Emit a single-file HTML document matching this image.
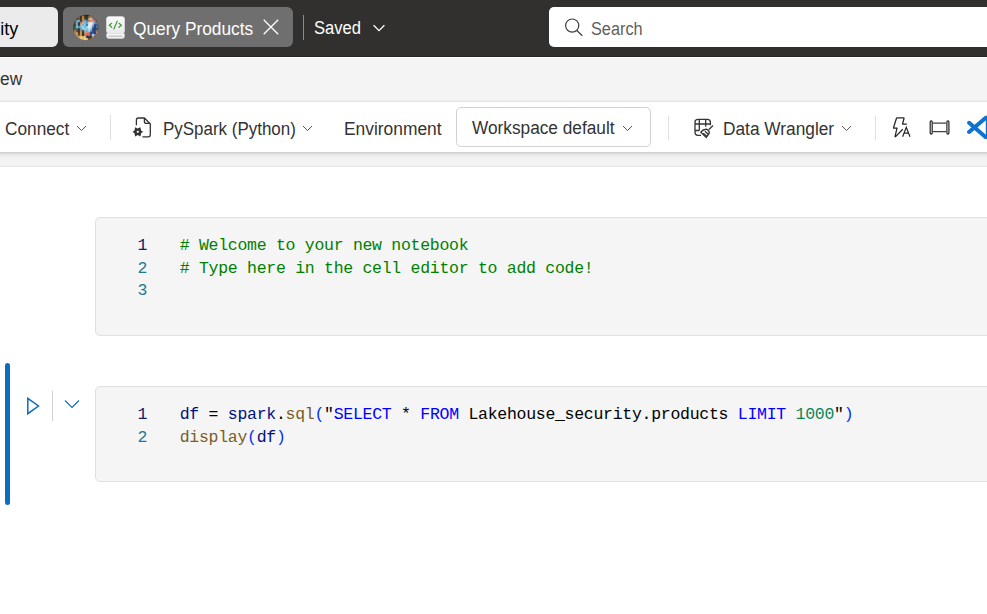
<!DOCTYPE html>
<html><head><meta charset="utf-8">
<style>
*{box-sizing:border-box;margin:0;padding:0}
html,body{width:987px;height:614px;overflow:hidden;background:#fff;font-family:"Liberation Sans",sans-serif;position:relative}
.a{position:absolute}
.t{position:absolute;white-space:pre;line-height:20px;font-size:18px;transform-origin:0 0}
#top{left:0;top:0;width:987px;height:57px;background:#31302e}
#tab1{left:-12px;top:7px;width:70px;height:40px;background:#ebebeb;border-radius:6px}
#tab2{left:63px;top:7px;width:230px;height:40px;background:#6f6f6f;border-radius:6px}
#ribbon{left:0;top:57px;width:987px;height:45px;background:#f4f4f4;border-top:1px solid #fff}
#tool{left:-10px;top:102px;width:1010px;height:50px;background:#fff;box-shadow:0 0 2px rgba(0,0,0,.12),0 2px 4px rgba(0,0,0,.14)}
#band{left:0;top:152px;width:987px;height:15px;background:#f3f3f3;border-bottom:1px solid #e6e6e6}
.sep{position:absolute;width:1px;background:#e0e0e0}
.cell{position:absolute;left:95px;width:910px;background:#f5f5f5;border:1px solid #e0e0e0;border-radius:5px}
.code{position:absolute;font-family:"Liberation Mono",monospace;font-size:16.5px;line-height:22.7px;white-space:pre;letter-spacing:-.28px}
.ln{color:#237893}
.cm{color:#008000}
.v{color:#001080}
.f{color:#795e26}
.b{color:#0431fa}
.k{color:#0000ff}
.n{color:#098658}
.k0{color:#000}
</style></head><body>
<div id="top" class="a"></div>
<div class="a" style="left:0;top:56px;width:987px;height:1px;background:#262523"></div>
<div id="tab1" class="a"></div>
<div class="t" style="left:0.2px;top:18.5px;color:#000">ity</div>
<div id="tab2" class="a"></div>
<!-- avatar -->
<svg class="a" style="left:72px;top:14px" width="28" height="28" viewBox="72 14 28 28" shape-rendering="crispEdges">
<defs><clipPath id="cc"><circle cx="85.75" cy="27.5" r="12.65"/></clipPath></defs>
<g clip-path="url(#cc)"><rect x="82" y="14" width="1" height="1" fill="#553820"/><rect x="83" y="14" width="1" height="1" fill="#55371f"/><rect x="84" y="14" width="1" height="1" fill="#3f2b19"/><rect x="85" y="14" width="1" height="1" fill="#332818"/><rect x="86" y="14" width="1" height="1" fill="#112a1a"/><rect x="87" y="14" width="1" height="1" fill="#0c2c1c"/><rect x="88" y="14" width="1" height="1" fill="#183828"/><rect x="89" y="14" width="1" height="1" fill="#283d2b"/><rect x="79" y="15" width="1" height="1" fill="#433023"/><rect x="80" y="15" width="1" height="1" fill="#3d2c20"/><rect x="81" y="15" width="1" height="1" fill="#432f20"/><rect x="82" y="15" width="1" height="1" fill="#624123"/><rect x="83" y="15" width="1" height="1" fill="#624123"/><rect x="84" y="15" width="1" height="1" fill="#452f1b"/><rect x="85" y="15" width="1" height="1" fill="#352a1a"/><rect x="86" y="15" width="1" height="1" fill="#142c1c"/><rect x="87" y="15" width="1" height="1" fill="#13301e"/><rect x="88" y="15" width="1" height="1" fill="#273c29"/><rect x="89" y="15" width="1" height="1" fill="#3a432c"/><rect x="90" y="15" width="1" height="1" fill="#775231"/><rect x="91" y="15" width="1" height="1" fill="#795031"/><rect x="78" y="16" width="1" height="1" fill="#755238"/><rect x="79" y="16" width="1" height="1" fill="#755237"/><rect x="80" y="16" width="1" height="1" fill="#432f1e"/><rect x="81" y="16" width="1" height="1" fill="#4b351e"/><rect x="82" y="16" width="1" height="1" fill="#a67737"/><rect x="83" y="16" width="1" height="1" fill="#a87837"/><rect x="84" y="16" width="1" height="1" fill="#573a23"/><rect x="85" y="16" width="1" height="1" fill="#403020"/><rect x="86" y="16" width="1" height="1" fill="#1f3625"/><rect x="87" y="16" width="1" height="1" fill="#273c27"/><rect x="88" y="16" width="1" height="1" fill="#7c552e"/><rect x="89" y="16" width="1" height="1" fill="#915d31"/><rect x="90" y="16" width="1" height="1" fill="#a2693c"/><rect x="91" y="16" width="1" height="1" fill="#9f673d"/><rect x="92" y="16" width="1" height="1" fill="#79573c"/><rect x="93" y="16" width="1" height="1" fill="#694d38"/><rect x="77" y="17" width="1" height="1" fill="#493325"/><rect x="78" y="17" width="1" height="1" fill="#7d573a"/><rect x="79" y="17" width="1" height="1" fill="#7c5638"/><rect x="80" y="17" width="1" height="1" fill="#45301d"/><rect x="81" y="17" width="1" height="1" fill="#50381f"/><rect x="82" y="17" width="1" height="1" fill="#b4823c"/><rect x="83" y="17" width="1" height="1" fill="#b7843e"/><rect x="84" y="17" width="1" height="1" fill="#5f4127"/><rect x="85" y="17" width="1" height="1" fill="#453323"/><rect x="86" y="17" width="1" height="1" fill="#223928"/><rect x="87" y="17" width="1" height="1" fill="#30422e"/><rect x="88" y="17" width="1" height="1" fill="#90623a"/><rect x="89" y="17" width="1" height="1" fill="#a86d42"/><rect x="90" y="17" width="1" height="1" fill="#b47b50"/><rect x="91" y="17" width="1" height="1" fill="#af7950"/><rect x="92" y="17" width="1" height="1" fill="#88654a"/><rect x="93" y="17" width="1" height="1" fill="#765842"/><rect x="94" y="17" width="1" height="1" fill="#4a372a"/><rect x="76" y="18" width="1" height="1" fill="#523626"/><rect x="77" y="18" width="1" height="1" fill="#5c3c29"/><rect x="78" y="18" width="1" height="1" fill="#764e30"/><rect x="79" y="18" width="1" height="1" fill="#724c2e"/><rect x="80" y="18" width="1" height="1" fill="#442f1c"/><rect x="81" y="18" width="1" height="1" fill="#503920"/><rect x="82" y="18" width="1" height="1" fill="#b98c46"/><rect x="83" y="18" width="1" height="1" fill="#bd8f49"/><rect x="84" y="18" width="1" height="1" fill="#6a4c32"/><rect x="85" y="18" width="1" height="1" fill="#4f3d2e"/><rect x="86" y="18" width="1" height="1" fill="#273a2e"/><rect x="87" y="18" width="1" height="1" fill="#36473a"/><rect x="88" y="18" width="1" height="1" fill="#a48a76"/><rect x="89" y="18" width="1" height="1" fill="#bf9c88"/><rect x="90" y="18" width="1" height="1" fill="#d5bca7"/><rect x="91" y="18" width="1" height="1" fill="#d0b8a4"/><rect x="92" y="18" width="1" height="1" fill="#a48472"/><rect x="93" y="18" width="1" height="1" fill="#927362"/><rect x="94" y="18" width="1" height="1" fill="#6b5242"/><rect x="95" y="18" width="1" height="1" fill="#5d4638"/><rect x="75" y="19" width="1" height="1" fill="#443429"/><rect x="76" y="19" width="1" height="1" fill="#57463a"/><rect x="77" y="19" width="1" height="1" fill="#5e4f43"/><rect x="78" y="19" width="1" height="1" fill="#745f4a"/><rect x="79" y="19" width="1" height="1" fill="#6f5842"/><rect x="80" y="19" width="1" height="1" fill="#433325"/><rect x="81" y="19" width="1" height="1" fill="#503a24"/><rect x="82" y="19" width="1" height="1" fill="#b88b4a"/><rect x="83" y="19" width="1" height="1" fill="#bd9354"/><rect x="84" y="19" width="1" height="1" fill="#6e5c49"/><rect x="85" y="19" width="1" height="1" fill="#555047"/><rect x="86" y="19" width="1" height="1" fill="#2e4841"/><rect x="87" y="19" width="1" height="1" fill="#3d4f47"/><rect x="88" y="19" width="1" height="1" fill="#ab8e80"/><rect x="89" y="19" width="1" height="1" fill="#c79f8f"/><rect x="90" y="19" width="1" height="1" fill="#dcbeae"/><rect x="91" y="19" width="1" height="1" fill="#d8bcac"/><rect x="92" y="19" width="1" height="1" fill="#ad8d7d"/><rect x="93" y="19" width="1" height="1" fill="#9f7e6d"/><rect x="94" y="19" width="1" height="1" fill="#7d5c4a"/><rect x="95" y="19" width="1" height="1" fill="#6c4e3d"/><rect x="96" y="19" width="1" height="1" fill="#443125"/><rect x="74" y="20" width="1" height="1" fill="#5d402c"/><rect x="75" y="20" width="1" height="1" fill="#625040"/><rect x="76" y="20" width="1" height="1" fill="#5b92a4"/><rect x="77" y="20" width="1" height="1" fill="#5ea2ba"/><rect x="78" y="20" width="1" height="1" fill="#6eb2c9"/><rect x="79" y="20" width="1" height="1" fill="#69a3b7"/><rect x="80" y="20" width="1" height="1" fill="#424142"/><rect x="81" y="20" width="1" height="1" fill="#4f3c34"/><rect x="82" y="20" width="1" height="1" fill="#ae7756"/><rect x="83" y="20" width="1" height="1" fill="#b5886b"/><rect x="84" y="20" width="1" height="1" fill="#7aa9b8"/><rect x="85" y="20" width="1" height="1" fill="#66a5bd"/><rect x="86" y="20" width="1" height="1" fill="#4a7d8b"/><rect x="87" y="20" width="1" height="1" fill="#597880"/><rect x="88" y="20" width="1" height="1" fill="#b97569"/><rect x="89" y="20" width="1" height="1" fill="#d17b6b"/><rect x="90" y="20" width="1" height="1" fill="#dd8878"/><rect x="91" y="20" width="1" height="1" fill="#da8d7d"/><rect x="92" y="20" width="1" height="1" fill="#c19b8b"/><rect x="93" y="20" width="1" height="1" fill="#b99482"/><rect x="94" y="20" width="1" height="1" fill="#b57257"/><rect x="95" y="20" width="1" height="1" fill="#a26247"/><rect x="96" y="20" width="1" height="1" fill="#4b3327"/><rect x="74" y="21" width="1" height="1" fill="#64442e"/><rect x="75" y="21" width="1" height="1" fill="#685849"/><rect x="76" y="21" width="1" height="1" fill="#5da2ba"/><rect x="77" y="21" width="1" height="1" fill="#5cafce"/><rect x="78" y="21" width="1" height="1" fill="#67b2ce"/><rect x="79" y="21" width="1" height="1" fill="#67a2b8"/><rect x="80" y="21" width="1" height="1" fill="#504a4a"/><rect x="81" y="21" width="1" height="1" fill="#5f483f"/><rect x="82" y="21" width="1" height="1" fill="#b57d60"/><rect x="83" y="21" width="1" height="1" fill="#b78f79"/><rect x="84" y="21" width="1" height="1" fill="#7bb8cf"/><rect x="85" y="21" width="1" height="1" fill="#69b8d6"/><rect x="86" y="21" width="1" height="1" fill="#508fa3"/><rect x="87" y="21" width="1" height="1" fill="#608794"/><rect x="88" y="21" width="1" height="1" fill="#bf8177"/><rect x="89" y="21" width="1" height="1" fill="#d68375"/><rect x="90" y="21" width="1" height="1" fill="#e08e80"/><rect x="91" y="21" width="1" height="1" fill="#dd9386"/><rect x="92" y="21" width="1" height="1" fill="#c5a599"/><rect x="93" y="21" width="1" height="1" fill="#bd9f93"/><rect x="94" y="21" width="1" height="1" fill="#b77d67"/><rect x="95" y="21" width="1" height="1" fill="#a56c58"/><rect x="96" y="21" width="1" height="1" fill="#503f37"/><rect x="97" y="21" width="1" height="1" fill="#3f342d"/><rect x="73" y="22" width="1" height="1" fill="#593f2e"/><rect x="74" y="22" width="1" height="1" fill="#66462f"/><rect x="75" y="22" width="1" height="1" fill="#68594a"/><rect x="76" y="22" width="1" height="1" fill="#61acc4"/><rect x="77" y="22" width="1" height="1" fill="#5cacc9"/><rect x="78" y="22" width="1" height="1" fill="#464a53"/><rect x="79" y="22" width="1" height="1" fill="#503f3f"/><rect x="80" y="22" width="1" height="1" fill="#a5755e"/><rect x="81" y="22" width="1" height="1" fill="#ba8266"/><rect x="82" y="22" width="1" height="1" fill="#d3a182"/><rect x="83" y="22" width="1" height="1" fill="#caad97"/><rect x="84" y="22" width="1" height="1" fill="#74bcd2"/><rect x="85" y="22" width="1" height="1" fill="#5fbcdb"/><rect x="86" y="22" width="1" height="1" fill="#52adcb"/><rect x="87" y="22" width="1" height="1" fill="#65aec6"/><rect x="88" y="22" width="1" height="1" fill="#cecac7"/><rect x="89" y="22" width="1" height="1" fill="#e6d2c9"/><rect x="90" y="22" width="1" height="1" fill="#ecddda"/><rect x="91" y="22" width="1" height="1" fill="#e7dddc"/><rect x="92" y="22" width="1" height="1" fill="#c7cbd5"/><rect x="93" y="22" width="1" height="1" fill="#b7c0cc"/><rect x="94" y="22" width="1" height="1" fill="#8594a9"/><rect x="95" y="22" width="1" height="1" fill="#76879c"/><rect x="96" y="22" width="1" height="1" fill="#687885"/><rect x="97" y="22" width="1" height="1" fill="#5d6973"/><rect x="73" y="23" width="1" height="1" fill="#5b402e"/><rect x="74" y="23" width="1" height="1" fill="#64442e"/><rect x="75" y="23" width="1" height="1" fill="#655749"/><rect x="76" y="23" width="1" height="1" fill="#60adc5"/><rect x="77" y="23" width="1" height="1" fill="#5aa8c4"/><rect x="78" y="23" width="1" height="1" fill="#3e383f"/><rect x="79" y="23" width="1" height="1" fill="#4e312e"/><rect x="80" y="23" width="1" height="1" fill="#b57d62"/><rect x="81" y="23" width="1" height="1" fill="#ca9275"/><rect x="82" y="23" width="1" height="1" fill="#d1ac93"/><rect x="83" y="23" width="1" height="1" fill="#c1b3a4"/><rect x="84" y="23" width="1" height="1" fill="#73bfd8"/><rect x="85" y="23" width="1" height="1" fill="#60bcde"/><rect x="86" y="23" width="1" height="1" fill="#50aace"/><rect x="87" y="23" width="1" height="1" fill="#64afcd"/><rect x="88" y="23" width="1" height="1" fill="#d1d8d8"/><rect x="89" y="23" width="1" height="1" fill="#eae4de"/><rect x="90" y="23" width="1" height="1" fill="#eeeded"/><rect x="91" y="23" width="1" height="1" fill="#e7e9ed"/><rect x="92" y="23" width="1" height="1" fill="#c3d2e1"/><rect x="93" y="23" width="1" height="1" fill="#adc1d5"/><rect x="94" y="23" width="1" height="1" fill="#7290b1"/><rect x="95" y="23" width="1" height="1" fill="#6583a6"/><rect x="96" y="23" width="1" height="1" fill="#637c95"/><rect x="97" y="23" width="1" height="1" fill="#5e7081"/><rect x="98" y="23" width="1" height="1" fill="#403631"/><rect x="72" y="24" width="1" height="1" fill="#5a3b29"/><rect x="73" y="24" width="1" height="1" fill="#593a28"/><rect x="74" y="24" width="1" height="1" fill="#503423"/><rect x="75" y="24" width="1" height="1" fill="#51483f"/><rect x="76" y="24" width="1" height="1" fill="#5eabc4"/><rect x="77" y="24" width="1" height="1" fill="#58a8c5"/><rect x="78" y="24" width="1" height="1" fill="#343849"/><rect x="79" y="24" width="1" height="1" fill="#46343b"/><rect x="80" y="24" width="1" height="1" fill="#c3967c"/><rect x="81" y="24" width="1" height="1" fill="#d1ac93"/><rect x="82" y="24" width="1" height="1" fill="#8caebe"/><rect x="83" y="24" width="1" height="1" fill="#7eb4cd"/><rect x="84" y="24" width="1" height="1" fill="#7ec9e7"/><rect x="85" y="24" width="1" height="1" fill="#72c0e4"/><rect x="86" y="24" width="1" height="1" fill="#3e79b1"/><rect x="87" y="24" width="1" height="1" fill="#507eb0"/><rect x="88" y="24" width="1" height="1" fill="#d4dce3"/><rect x="89" y="24" width="1" height="1" fill="#eeeded"/><rect x="90" y="24" width="1" height="1" fill="#eaeaef"/><rect x="91" y="24" width="1" height="1" fill="#dfe3ec"/><rect x="92" y="24" width="1" height="1" fill="#afc2d7"/><rect x="93" y="24" width="1" height="1" fill="#93acc8"/><rect x="94" y="24" width="1" height="1" fill="#3d5c92"/><rect x="95" y="24" width="1" height="1" fill="#2f4f8a"/><rect x="96" y="24" width="1" height="1" fill="#43629b"/><rect x="97" y="24" width="1" height="1" fill="#445c8b"/><rect x="98" y="24" width="1" height="1" fill="#3c3333"/><rect x="72" y="25" width="1" height="1" fill="#583a28"/><rect x="73" y="25" width="1" height="1" fill="#553a27"/><rect x="74" y="25" width="1" height="1" fill="#4a3723"/><rect x="75" y="25" width="1" height="1" fill="#4d4c3f"/><rect x="76" y="25" width="1" height="1" fill="#60aec6"/><rect x="77" y="25" width="1" height="1" fill="#5dafcd"/><rect x="78" y="25" width="1" height="1" fill="#38475b"/><rect x="79" y="25" width="1" height="1" fill="#454552"/><rect x="80" y="25" width="1" height="1" fill="#baa190"/><rect x="81" y="25" width="1" height="1" fill="#c4b4a4"/><rect x="82" y="25" width="1" height="1" fill="#82b6cd"/><rect x="83" y="25" width="1" height="1" fill="#77b9d7"/><rect x="84" y="25" width="1" height="1" fill="#7cc9e9"/><rect x="85" y="25" width="1" height="1" fill="#74c0e3"/><rect x="86" y="25" width="1" height="1" fill="#467eb4"/><rect x="87" y="25" width="1" height="1" fill="#5884b5"/><rect x="88" y="25" width="1" height="1" fill="#d7dfe7"/><rect x="89" y="25" width="1" height="1" fill="#eeeef0"/><rect x="90" y="25" width="1" height="1" fill="#e6e8f0"/><rect x="91" y="25" width="1" height="1" fill="#d7deeb"/><rect x="92" y="25" width="1" height="1" fill="#9fb9d3"/><rect x="93" y="25" width="1" height="1" fill="#829fc2"/><rect x="94" y="25" width="1" height="1" fill="#304f8a"/><rect x="95" y="25" width="1" height="1" fill="#254584"/><rect x="96" y="25" width="1" height="1" fill="#3d5e9e"/><rect x="97" y="25" width="1" height="1" fill="#415c90"/><rect x="98" y="25" width="1" height="1" fill="#3c3334"/><rect x="72" y="26" width="1" height="1" fill="#4c3a28"/><rect x="73" y="26" width="1" height="1" fill="#4a3e29"/><rect x="74" y="26" width="1" height="1" fill="#3f552d"/><rect x="75" y="26" width="1" height="1" fill="#456b4a"/><rect x="76" y="26" width="1" height="1" fill="#72bcd1"/><rect x="77" y="26" width="1" height="1" fill="#74c2e2"/><rect x="78" y="26" width="1" height="1" fill="#5298b6"/><rect x="79" y="26" width="1" height="1" fill="#5596b2"/><rect x="80" y="26" width="1" height="1" fill="#76b5cd"/><rect x="81" y="26" width="1" height="1" fill="#82c1d8"/><rect x="82" y="26" width="1" height="1" fill="#98d5e7"/><rect x="83" y="26" width="1" height="1" fill="#92d5e9"/><rect x="84" y="26" width="1" height="1" fill="#6bb9d7"/><rect x="85" y="26" width="1" height="1" fill="#67b6d5"/><rect x="86" y="26" width="1" height="1" fill="#7fcce3"/><rect x="87" y="26" width="1" height="1" fill="#94d4e7"/><rect x="88" y="26" width="1" height="1" fill="#dee9ed"/><rect x="89" y="26" width="1" height="1" fill="#eceef0"/><rect x="90" y="26" width="1" height="1" fill="#d8e3f0"/><rect x="91" y="26" width="1" height="1" fill="#c1d5e9"/><rect x="92" y="26" width="1" height="1" fill="#6195c9"/><rect x="93" y="26" width="1" height="1" fill="#467cb6"/><rect x="94" y="26" width="1" height="1" fill="#28467e"/><rect x="95" y="26" width="1" height="1" fill="#27427d"/><rect x="96" y="26" width="1" height="1" fill="#4772b1"/><rect x="97" y="26" width="1" height="1" fill="#4b70a4"/><rect x="98" y="26" width="1" height="1" fill="#3d3637"/><rect x="72" y="27" width="1" height="1" fill="#483827"/><rect x="73" y="27" width="1" height="1" fill="#483e29"/><rect x="74" y="27" width="1" height="1" fill="#415930"/><rect x="75" y="27" width="1" height="1" fill="#486c4a"/><rect x="76" y="27" width="1" height="1" fill="#71b2c7"/><rect x="77" y="27" width="1" height="1" fill="#72b8d7"/><rect x="78" y="27" width="1" height="1" fill="#5396b5"/><rect x="79" y="27" width="1" height="1" fill="#5298b5"/><rect x="80" y="27" width="1" height="1" fill="#69b5d3"/><rect x="81" y="27" width="1" height="1" fill="#74c2de"/><rect x="82" y="27" width="1" height="1" fill="#95d9eb"/><rect x="83" y="27" width="1" height="1" fill="#96d8ea"/><rect x="84" y="27" width="1" height="1" fill="#73b8d7"/><rect x="85" y="27" width="1" height="1" fill="#71b8d7"/><rect x="86" y="27" width="1" height="1" fill="#8bd6ea"/><rect x="87" y="27" width="1" height="1" fill="#9adeee"/><rect x="88" y="27" width="1" height="1" fill="#d8ecef"/><rect x="89" y="27" width="1" height="1" fill="#e0ecf0"/><rect x="90" y="27" width="1" height="1" fill="#cbe1f0"/><rect x="91" y="27" width="1" height="1" fill="#b3cee5"/><rect x="92" y="27" width="1" height="1" fill="#5187bc"/><rect x="93" y="27" width="1" height="1" fill="#3a6ea9"/><rect x="94" y="27" width="1" height="1" fill="#254178"/><rect x="95" y="27" width="1" height="1" fill="#28417a"/><rect x="96" y="27" width="1" height="1" fill="#476fad"/><rect x="97" y="27" width="1" height="1" fill="#4a6da1"/><rect x="98" y="27" width="1" height="1" fill="#3c3536"/><rect x="72" y="28" width="1" height="1" fill="#3c2c21"/><rect x="73" y="28" width="1" height="1" fill="#413325"/><rect x="74" y="28" width="1" height="1" fill="#5e543a"/><rect x="75" y="28" width="1" height="1" fill="#62604c"/><rect x="76" y="28" width="1" height="1" fill="#536c82"/><rect x="77" y="28" width="1" height="1" fill="#4e6a88"/><rect x="78" y="28" width="1" height="1" fill="#41485c"/><rect x="79" y="28" width="1" height="1" fill="#435063"/><rect x="80" y="28" width="1" height="1" fill="#5da3b5"/><rect x="81" y="28" width="1" height="1" fill="#68b7c9"/><rect x="82" y="28" width="1" height="1" fill="#7fcede"/><rect x="83" y="28" width="1" height="1" fill="#8acfe2"/><rect x="84" y="28" width="1" height="1" fill="#adc1e5"/><rect x="85" y="28" width="1" height="1" fill="#acbfe5"/><rect x="86" y="28" width="1" height="1" fill="#88c3e2"/><rect x="87" y="28" width="1" height="1" fill="#8acae4"/><rect x="88" y="28" width="1" height="1" fill="#a5e4ee"/><rect x="89" y="28" width="1" height="1" fill="#a9e7f0"/><rect x="90" y="28" width="1" height="1" fill="#9ddcf0"/><rect x="91" y="28" width="1" height="1" fill="#89c4de"/><rect x="92" y="28" width="1" height="1" fill="#435e80"/><rect x="93" y="28" width="1" height="1" fill="#31466d"/><rect x="94" y="28" width="1" height="1" fill="#2a3d71"/><rect x="95" y="28" width="1" height="1" fill="#2c3e75"/><rect x="96" y="28" width="1" height="1" fill="#3a4e85"/><rect x="97" y="28" width="1" height="1" fill="#3c4b79"/><rect x="98" y="28" width="1" height="1" fill="#3b3131"/><rect x="72" y="29" width="1" height="1" fill="#3a2a20"/><rect x="73" y="29" width="1" height="1" fill="#433325"/><rect x="74" y="29" width="1" height="1" fill="#69573d"/><rect x="75" y="29" width="1" height="1" fill="#6c5e49"/><rect x="76" y="29" width="1" height="1" fill="#535e70"/><rect x="77" y="29" width="1" height="1" fill="#49566e"/><rect x="78" y="29" width="1" height="1" fill="#3d3544"/><rect x="79" y="29" width="1" height="1" fill="#43414b"/><rect x="80" y="29" width="1" height="1" fill="#65999f"/><rect x="81" y="29" width="1" height="1" fill="#6cacb3"/><rect x="82" y="29" width="1" height="1" fill="#74bac9"/><rect x="83" y="29" width="1" height="1" fill="#7cbdd2"/><rect x="84" y="29" width="1" height="1" fill="#acbcdf"/><rect x="85" y="29" width="1" height="1" fill="#aebee4"/><rect x="86" y="29" width="1" height="1" fill="#84bede"/><rect x="87" y="29" width="1" height="1" fill="#82c3e0"/><rect x="88" y="29" width="1" height="1" fill="#9edfea"/><rect x="89" y="29" width="1" height="1" fill="#9fe0eb"/><rect x="90" y="29" width="1" height="1" fill="#8ed1e8"/><rect x="91" y="29" width="1" height="1" fill="#7cb9d4"/><rect x="92" y="29" width="1" height="1" fill="#3d5577"/><rect x="93" y="29" width="1" height="1" fill="#2f4067"/><rect x="94" y="29" width="1" height="1" fill="#2b3c71"/><rect x="95" y="29" width="1" height="1" fill="#303f73"/><rect x="96" y="29" width="1" height="1" fill="#434e7b"/><rect x="97" y="29" width="1" height="1" fill="#454b6e"/><rect x="98" y="29" width="1" height="1" fill="#3e312d"/><rect x="72" y="30" width="1" height="1" fill="#3a2a20"/><rect x="73" y="30" width="1" height="1" fill="#473527"/><rect x="74" y="30" width="1" height="1" fill="#8b6f47"/><rect x="75" y="30" width="1" height="1" fill="#8f744e"/><rect x="76" y="30" width="1" height="1" fill="#615349"/><rect x="77" y="30" width="1" height="1" fill="#534844"/><rect x="78" y="30" width="1" height="1" fill="#3e2f2b"/><rect x="79" y="30" width="1" height="1" fill="#4a3a2f"/><rect x="80" y="30" width="1" height="1" fill="#a18457"/><rect x="81" y="30" width="1" height="1" fill="#a18d64"/><rect x="82" y="30" width="1" height="1" fill="#3f5d70"/><rect x="83" y="30" width="1" height="1" fill="#3c6280"/><rect x="84" y="30" width="1" height="1" fill="#7cacc7"/><rect x="85" y="30" width="1" height="1" fill="#84b8d3"/><rect x="86" y="30" width="1" height="1" fill="#6bb3d3"/><rect x="87" y="30" width="1" height="1" fill="#71b8d4"/><rect x="88" y="30" width="1" height="1" fill="#afceda"/><rect x="89" y="30" width="1" height="1" fill="#b0ccd7"/><rect x="90" y="30" width="1" height="1" fill="#73a3be"/><rect x="91" y="30" width="1" height="1" fill="#5e8daf"/><rect x="92" y="30" width="1" height="1" fill="#395586"/><rect x="93" y="30" width="1" height="1" fill="#2f467c"/><rect x="94" y="30" width="1" height="1" fill="#2b407d"/><rect x="95" y="30" width="1" height="1" fill="#38477b"/><rect x="96" y="30" width="1" height="1" fill="#837068"/><rect x="97" y="30" width="1" height="1" fill="#856d5a"/><rect x="98" y="30" width="1" height="1" fill="#45352b"/><rect x="73" y="31" width="1" height="1" fill="#4a3827"/><rect x="74" y="31" width="1" height="1" fill="#947548"/><rect x="75" y="31" width="1" height="1" fill="#9e7d4d"/><rect x="76" y="31" width="1" height="1" fill="#735c44"/><rect x="77" y="31" width="1" height="1" fill="#624f3d"/><rect x="78" y="31" width="1" height="1" fill="#433025"/><rect x="79" y="31" width="1" height="1" fill="#4f3928"/><rect x="80" y="31" width="1" height="1" fill="#b0844b"/><rect x="81" y="31" width="1" height="1" fill="#ab8652"/><rect x="82" y="31" width="1" height="1" fill="#394a59"/><rect x="83" y="31" width="1" height="1" fill="#314d68"/><rect x="84" y="31" width="1" height="1" fill="#7ca0b3"/><rect x="85" y="31" width="1" height="1" fill="#8bb0c1"/><rect x="86" y="31" width="1" height="1" fill="#77aac0"/><rect x="87" y="31" width="1" height="1" fill="#7eacc0"/><rect x="88" y="31" width="1" height="1" fill="#b9bfc3"/><rect x="89" y="31" width="1" height="1" fill="#b2b8c0"/><rect x="90" y="31" width="1" height="1" fill="#698caa"/><rect x="91" y="31" width="1" height="1" fill="#537ca3"/><rect x="92" y="31" width="1" height="1" fill="#355088"/><rect x="93" y="31" width="1" height="1" fill="#2f4782"/><rect x="94" y="31" width="1" height="1" fill="#2a407e"/><rect x="95" y="31" width="1" height="1" fill="#3c4978"/><rect x="96" y="31" width="1" height="1" fill="#927965"/><rect x="97" y="31" width="1" height="1" fill="#947758"/><rect x="98" y="31" width="1" height="1" fill="#4a382a"/><rect x="73" y="32" width="1" height="1" fill="#4d3926"/><rect x="74" y="32" width="1" height="1" fill="#a87f43"/><rect x="75" y="32" width="1" height="1" fill="#ba8d4a"/><rect x="76" y="32" width="1" height="1" fill="#bf934d"/><rect x="77" y="32" width="1" height="1" fill="#ac8447"/><rect x="78" y="32" width="1" height="1" fill="#4c3727"/><rect x="79" y="32" width="1" height="1" fill="#523b29"/><rect x="80" y="32" width="1" height="1" fill="#c49855"/><rect x="81" y="32" width="1" height="1" fill="#bf9859"/><rect x="82" y="32" width="1" height="1" fill="#37383c"/><rect x="83" y="32" width="1" height="1" fill="#353643"/><rect x="84" y="32" width="1" height="1" fill="#b88573"/><rect x="85" y="32" width="1" height="1" fill="#d0947d"/><rect x="86" y="32" width="1" height="1" fill="#ce8973"/><rect x="87" y="32" width="1" height="1" fill="#d0876f"/><rect x="88" y="32" width="1" height="1" fill="#d27f66"/><rect x="89" y="32" width="1" height="1" fill="#bd7666"/><rect x="90" y="32" width="1" height="1" fill="#494f78"/><rect x="91" y="32" width="1" height="1" fill="#31477d"/><rect x="92" y="32" width="1" height="1" fill="#314f98"/><rect x="93" y="32" width="1" height="1" fill="#2e4b94"/><rect x="94" y="32" width="1" height="1" fill="#24366c"/><rect x="95" y="32" width="1" height="1" fill="#384165"/><rect x="96" y="32" width="1" height="1" fill="#a58c6d"/><rect x="97" y="32" width="1" height="1" fill="#a88b62"/><rect x="74" y="33" width="1" height="1" fill="#a87d41"/><rect x="75" y="33" width="1" height="1" fill="#bf8f49"/><rect x="76" y="33" width="1" height="1" fill="#cc9c50"/><rect x="77" y="33" width="1" height="1" fill="#bb8f4b"/><rect x="78" y="33" width="1" height="1" fill="#563c28"/><rect x="79" y="33" width="1" height="1" fill="#583e29"/><rect x="80" y="33" width="1" height="1" fill="#c79a55"/><rect x="81" y="33" width="1" height="1" fill="#c09856"/><rect x="82" y="33" width="1" height="1" fill="#373435"/><rect x="83" y="33" width="1" height="1" fill="#372f37"/><rect x="84" y="33" width="1" height="1" fill="#c07d64"/><rect x="85" y="33" width="1" height="1" fill="#dd8b6b"/><rect x="86" y="33" width="1" height="1" fill="#dc7e5e"/><rect x="87" y="33" width="1" height="1" fill="#db7a5a"/><rect x="88" y="33" width="1" height="1" fill="#d77151"/><rect x="89" y="33" width="1" height="1" fill="#bd6956"/><rect x="90" y="33" width="1" height="1" fill="#44456f"/><rect x="91" y="33" width="1" height="1" fill="#32457e"/><rect x="92" y="33" width="1" height="1" fill="#435ea2"/><rect x="93" y="33" width="1" height="1" fill="#445fa1"/><rect x="94" y="33" width="1" height="1" fill="#324574"/><rect x="95" y="33" width="1" height="1" fill="#3c4767"/><rect x="96" y="33" width="1" height="1" fill="#9c8667"/><rect x="97" y="33" width="1" height="1" fill="#9d815b"/><rect x="74" y="34" width="1" height="1" fill="#94693c"/><rect x="75" y="34" width="1" height="1" fill="#ab7b45"/><rect x="76" y="34" width="1" height="1" fill="#ca9a5a"/><rect x="77" y="34" width="1" height="1" fill="#bf9055"/><rect x="78" y="34" width="1" height="1" fill="#744729"/><rect x="79" y="34" width="1" height="1" fill="#744828"/><rect x="80" y="34" width="1" height="1" fill="#c1924b"/><rect x="81" y="34" width="1" height="1" fill="#b68e4b"/><rect x="82" y="34" width="1" height="1" fill="#362e2a"/><rect x="83" y="34" width="1" height="1" fill="#36292c"/><rect x="84" y="34" width="1" height="1" fill="#b67259"/><rect x="85" y="34" width="1" height="1" fill="#d17e5e"/><rect x="86" y="34" width="1" height="1" fill="#c76949"/><rect x="87" y="34" width="1" height="1" fill="#c66646"/><rect x="88" y="34" width="1" height="1" fill="#d06f4f"/><rect x="89" y="34" width="1" height="1" fill="#b96a58"/><rect x="90" y="34" width="1" height="1" fill="#485283"/><rect x="91" y="34" width="1" height="1" fill="#435e97"/><rect x="92" y="34" width="1" height="1" fill="#b2b9d2"/><rect x="93" y="34" width="1" height="1" fill="#b8c0d3"/><rect x="94" y="34" width="1" height="1" fill="#718ca1"/><rect x="95" y="34" width="1" height="1" fill="#647a89"/><rect x="96" y="34" width="1" height="1" fill="#4e433a"/><rect x="75" y="35" width="1" height="1" fill="#9b6e40"/><rect x="76" y="35" width="1" height="1" fill="#c39456"/><rect x="77" y="35" width="1" height="1" fill="#c39355"/><rect x="78" y="35" width="1" height="1" fill="#865630"/><rect x="79" y="35" width="1" height="1" fill="#885830"/><rect x="80" y="35" width="1" height="1" fill="#c99a50"/><rect x="81" y="35" width="1" height="1" fill="#c09650"/><rect x="82" y="35" width="1" height="1" fill="#4e4132"/><rect x="83" y="35" width="1" height="1" fill="#4e3e34"/><rect x="84" y="35" width="1" height="1" fill="#c0805f"/><rect x="85" y="35" width="1" height="1" fill="#cb8260"/><rect x="86" y="35" width="1" height="1" fill="#b16145"/><rect x="87" y="35" width="1" height="1" fill="#a95941"/><rect x="88" y="35" width="1" height="1" fill="#b4644d"/><rect x="89" y="35" width="1" height="1" fill="#a46358"/><rect x="90" y="35" width="1" height="1" fill="#404f81"/><rect x="91" y="35" width="1" height="1" fill="#476094"/><rect x="92" y="35" width="1" height="1" fill="#c1c2cd"/><rect x="93" y="35" width="1" height="1" fill="#cac9cd"/><rect x="94" y="35" width="1" height="1" fill="#7a8e98"/><rect x="95" y="35" width="1" height="1" fill="#62757e"/><rect x="96" y="35" width="1" height="1" fill="#40352e"/><rect x="76" y="36" width="1" height="1" fill="#b28140"/><rect x="77" y="36" width="1" height="1" fill="#c28e46"/><rect x="78" y="36" width="1" height="1" fill="#cf9e55"/><rect x="79" y="36" width="1" height="1" fill="#d4a55b"/><rect x="80" y="36" width="1" height="1" fill="#e6bb6e"/><rect x="81" y="36" width="1" height="1" fill="#e3bc6f"/><rect x="82" y="36" width="1" height="1" fill="#d1ad67"/><rect x="83" y="36" width="1" height="1" fill="#d1ac6a"/><rect x="84" y="36" width="1" height="1" fill="#e3be83"/><rect x="85" y="36" width="1" height="1" fill="#d3af7d"/><rect x="86" y="36" width="1" height="1" fill="#4c3f3e"/><rect x="87" y="36" width="1" height="1" fill="#342c37"/><rect x="88" y="36" width="1" height="1" fill="#39374c"/><rect x="89" y="36" width="1" height="1" fill="#343854"/><rect x="90" y="36" width="1" height="1" fill="#283663"/><rect x="91" y="36" width="1" height="1" fill="#3b476e"/><rect x="92" y="36" width="1" height="1" fill="#ac9889"/><rect x="93" y="36" width="1" height="1" fill="#b29982"/><rect x="94" y="36" width="1" height="1" fill="#554a41"/><rect x="95" y="36" width="1" height="1" fill="#40352e"/><rect x="77" y="37" width="1" height="1" fill="#b58340"/><rect x="78" y="37" width="1" height="1" fill="#d3a156"/><rect x="79" y="37" width="1" height="1" fill="#dfaf62"/><rect x="80" y="37" width="1" height="1" fill="#ecc478"/><rect x="81" y="37" width="1" height="1" fill="#eec87b"/><rect x="82" y="37" width="1" height="1" fill="#e8c071"/><rect x="83" y="37" width="1" height="1" fill="#e8c174"/><rect x="84" y="37" width="1" height="1" fill="#eecf8e"/><rect x="85" y="37" width="1" height="1" fill="#d8be89"/><rect x="86" y="37" width="1" height="1" fill="#524f4a"/><rect x="87" y="37" width="1" height="1" fill="#36373e"/><rect x="88" y="37" width="1" height="1" fill="#303649"/><rect x="89" y="37" width="1" height="1" fill="#2e344b"/><rect x="90" y="37" width="1" height="1" fill="#313656"/><rect x="91" y="37" width="1" height="1" fill="#41425c"/><rect x="92" y="37" width="1" height="1" fill="#9e846f"/><rect x="93" y="37" width="1" height="1" fill="#9d8167"/><rect x="94" y="37" width="1" height="1" fill="#49372b"/><rect x="78" y="38" width="1" height="1" fill="#b57c40"/><rect x="79" y="38" width="1" height="1" fill="#cb9250"/><rect x="80" y="38" width="1" height="1" fill="#eacb8e"/><rect x="81" y="38" width="1" height="1" fill="#eed192"/><rect x="82" y="38" width="1" height="1" fill="#e3b76a"/><rect x="83" y="38" width="1" height="1" fill="#e3b86d"/><rect x="84" y="38" width="1" height="1" fill="#eed8a1"/><rect x="85" y="38" width="1" height="1" fill="#e8d5a4"/><rect x="86" y="38" width="1" height="1" fill="#d8be89"/><rect x="87" y="38" width="1" height="1" fill="#c2a676"/><rect x="88" y="38" width="1" height="1" fill="#724d33"/><rect x="89" y="38" width="1" height="1" fill="#69412a"/><rect x="90" y="38" width="1" height="1" fill="#875535"/><rect x="91" y="38" width="1" height="1" fill="#875737"/><rect x="92" y="38" width="1" height="1" fill="#543e2f"/><rect x="93" y="38" width="1" height="1" fill="#49372b"/><rect x="79" y="39" width="1" height="1" fill="#b58047"/><rect x="80" y="39" width="1" height="1" fill="#dbbc86"/><rect x="81" y="39" width="1" height="1" fill="#e3c48a"/><rect x="82" y="39" width="1" height="1" fill="#daad62"/><rect x="83" y="39" width="1" height="1" fill="#dbaf65"/><rect x="84" y="39" width="1" height="1" fill="#e6ce98"/><rect x="85" y="39" width="1" height="1" fill="#e9d29d"/><rect x="86" y="39" width="1" height="1" fill="#e9c688"/><rect x="87" y="39" width="1" height="1" fill="#d8b277"/><rect x="88" y="39" width="1" height="1" fill="#845630"/><rect x="89" y="39" width="1" height="1" fill="#764624"/><rect x="90" y="39" width="1" height="1" fill="#8e562c"/><rect x="91" y="39" width="1" height="1" fill="#85522c"/><rect x="82" y="40" width="1" height="1" fill="#b68747"/><rect x="83" y="40" width="1" height="1" fill="#ba8b4a"/><rect x="84" y="40" width="1" height="1" fill="#c5985a"/><rect x="85" y="40" width="1" height="1" fill="#c79a5b"/><rect x="86" y="40" width="1" height="1" fill="#c78e4f"/><rect x="87" y="40" width="1" height="1" fill="#bc8246"/><rect x="88" y="40" width="1" height="1" fill="#916034"/><rect x="89" y="40" width="1" height="1" fill="#7f522c"/></g></svg>
<!-- notebook icon -->
<svg class="a" style="left:106px;top:15.5px" width="19" height="23" viewBox="0 0 19 23">
<defs><linearGradient id="ng" x1="0" y1="0" x2="0" y2="1"><stop offset="0" stop-color="#fbfbfb"/><stop offset="1" stop-color="#e9e9e9"/></linearGradient></defs>
<rect x="0.5" y="16.5" width="18" height="6" rx="2.5" fill="#f4f4f4" stroke="#d0d0d0" stroke-width="0.6"/>
<path d="M2.5 20.2 H16.5" stroke="#b5b5b5" stroke-width="1"/>
<rect x="0.3" y="0.5" width="18.4" height="17" rx="3" fill="url(#ng)" stroke="#dcdcdc" stroke-width="0.6"/>
<path d="M5.7 7.3 L3.3 9.3 L5.7 11.3 M13 7.3 L15.4 9.3 L13 11.3 M11.2 5.2 L7.9 13" stroke="#3c9a3c" stroke-width="1.15" fill="none" stroke-linecap="round"/>
</svg>
<div class="t" style="left:133.24px;top:18.8px;color:#fff;transform:scaleX(.9605)">Query Products</div>
<svg class="a" style="left:262.5px;top:19.2px" width="16" height="16" viewBox="0 0 16 16"><path d="M0.7 0.7 L15.2 15.2 M15.2 0.7 L0.7 15.2" stroke="#fff" stroke-width="1.3"/></svg>
<div class="sep" style="left:303px;top:15px;height:25px;background:#8a8a8a"></div>
<div class="t" style="left:313.8px;top:18px;color:#fff;transform:scaleX(.92)">Saved</div>
<svg class="a" style="left:372px;top:23px" width="14" height="10" viewBox="0 0 14 10"><path d="M1.6 2.3 L7 7.7 L12.4 2.3" stroke="#fff" stroke-width="1.3" fill="none"/></svg>
<!-- search -->
<div class="a" style="left:549px;top:7px;width:460px;height:40px;background:#fff;border-radius:5px"></div>
<svg class="a" style="left:563px;top:17px" width="21" height="21" viewBox="0 0 21 21"><circle cx="9.2" cy="8.6" r="6.6" stroke="#424242" stroke-width="1.2" fill="none"/><path d="M13.9 13.5 L19.3 18.8" stroke="#424242" stroke-width="1.3"/></svg>
<div class="t" style="left:591.4px;top:19px;color:#616161;transform:scaleX(.905)">Search</div>

<!-- ribbon -->
<div id="ribbon" class="a"></div>
<div class="t" style="left:-14.7px;top:69px;color:#333;transform:scaleX(.96)">View</div>

<div id="band" class="a"></div>
<div id="tool" class="a"></div>
<div class="t" style="left:4.54px;top:119px;color:#333;transform:scaleX(.958)">Connect</div>
<svg class="a" style="left:76.2px;top:124.3px" width="11" height="8" viewBox="0 0 11 8"><path d="M1 2 L5.5 6.5 L10 2" stroke="#555" stroke-width="1" fill="none"/></svg>
<div class="sep" style="left:110px;top:115px;height:25px"></div>
<!-- pyspark icon -->
<svg class="a" style="left:125px;top:110px" width="40" height="35" viewBox="125 110 40 35">
<g stroke="#333" stroke-width="1.3" fill="none">
<path d="M136.4 125.2 V120 Q136.4 118 138.4 118 H144.4 L150.3 124 V134.8 Q150.3 136.8 148.3 136.8 H142.4"/>
<path d="M144.4 118 V121.4 Q144.4 123.4 146.4 123.4 H150.3"/>
</g>
<g transform="translate(137.8,131.8)" fill="#333">
<path d="M-5.3 0 L-3.3 -1.4 L-2.65 -4.6 L-0.3 -3.3 L2.65 -4.6 L3.3 -1.4 L5.3 0 L3.3 1.4 L2.65 4.6 L0 3.3 L-2.65 4.6 L-3.3 1.4 Z"/>
<circle r="2.9"/><circle r="1.1" fill="#fff"/>
</g></svg>
<div class="t" style="left:162.66px;top:119px;color:#333;transform:scaleX(.942)">PySpark (Python)</div>
<svg class="a" style="left:302px;top:124.3px" width="11" height="8" viewBox="0 0 11 8"><path d="M1 2 L5.5 6.5 L10 2" stroke="#555" stroke-width="1" fill="none"/></svg>
<div class="t" style="left:343.5px;top:119px;color:#333;transform:scaleX(.966)">Environment</div>
<div class="a" style="left:456px;top:107px;width:195px;height:40px;border:1px solid #d1d1d1;border-radius:5px;background:#fff"></div>
<div class="t" style="left:472.3px;top:118px;color:#333;transform:scaleX(.958)">Workspace default</div>
<svg class="a" style="left:622px;top:123.5px" width="11" height="8" viewBox="0 0 11 8"><path d="M1 2 L5.5 6.5 L10 2" stroke="#555" stroke-width="1" fill="none"/></svg>
<div class="sep" style="left:668px;top:116px;height:24px"></div>
<!-- data wrangler icon -->
<svg class="a" style="left:688px;top:112px" width="32" height="30" viewBox="688 112 32 30">
<g stroke="#333" stroke-width="1.3" fill="none">
<path d="M701 135.3 H698 Q695 135.3 695 132.3 V122.4 Q695 119.4 698 119.4 H707.4 Q710.4 119.4 710.4 122.4 V125.2"/>
<path d="M695 124 H710.4 M695 130.5 H699.3 M699.3 119.4 V130.5 M705.7 119.4 V126.7"/>
<path d="M713 125.5 L709 129.5"/>
<path d="M700.8 132.2 Q703.5 128.8 707 129.3 Q709.6 130.6 709.2 133.2 L706.3 137.6 Z"/>
<path d="M703.2 133.2 L706.8 136.2 M705 131.3 L708.2 134.3"/>
</g></svg>
<div class="t" style="left:722.64px;top:119px;color:#333;transform:scaleX(.96)">Data Wrangler</div>
<svg class="a" style="left:841px;top:124.3px" width="11" height="8" viewBox="0 0 11 8"><path d="M1 2 L5.5 6.5 L10 2" stroke="#555" stroke-width="1" fill="none"/></svg>
<div class="sep" style="left:875px;top:116px;height:24px"></div>
<!-- lightning A -->
<svg class="a" style="left:886px;top:112px" width="70" height="30" viewBox="886 112 70 30">
<path d="M902.8 129.3 L895.6 136.6 Q894.9 137.1 895.1 136.3 L897 128.2 H893.8 Q893.3 128.2 893.5 127.7 L896.4 118.5 Q896.6 117.9 897.2 117.9 H903.6 Q904.2 117.9 904 118.5 L902.5 124 H906.8" stroke="#242424" stroke-width="1.25" fill="none" stroke-linejoin="round"/>
<path d="M902.6 136.8 L906.3 127.4 L910 136.8 M903.9 133.2 H908.7" stroke="#242424" stroke-width="1.2" fill="none"/>
<rect x="930.2" y="120.8" width="2" height="13.3" rx="1" stroke="#242424" stroke-width="1.2" fill="none"/>
<rect x="946.9" y="120.8" width="2" height="13.3" rx="1" stroke="#242424" stroke-width="1.2" fill="none"/>
<path d="M932.8 123.1 H946.3 M932.8 131.6 H946.3" stroke="#424242" stroke-width="1.3"/>
</svg>
<!-- vscode -->
<svg class="a" style="left:955px;top:108px" width="32" height="38" viewBox="955 108 32 38">
<path d="M969.1 122.8 L985.5 136.9 M969.1 132 L985.5 117.9" stroke="#0e72d0" stroke-width="4" fill="none" stroke-linecap="round"/>
<rect x="985.8" y="115" width="6" height="24.7" rx="2.2" fill="#0e72d0"/>
</svg>

<!-- cell 1 -->
<div class="cell" style="top:217px;height:119px"></div>
<div class="code" style="left:137.5px;top:235px"><span style="color:#0b216f">1</span>
<span class="ln">2</span>
<span class="ln">3</span></div>
<div class="code cm" style="left:179.7px;top:235px"># Welcome to your new notebook
# Type here in the cell editor to add code!</div>

<!-- cell 2 -->
<div class="a" style="left:5px;top:363px;width:5px;height:142px;background:#0f6cbd;border-radius:3px"></div>
<svg class="a" style="left:25px;top:396px" width="16" height="20" viewBox="0 0 16 20"><path d="M2.8 2.3 L13.5 10 L2.8 17.7 Z" stroke="#0f6cbd" stroke-width="1.5" fill="none" stroke-linejoin="miter"/></svg>
<div class="sep" style="left:52px;top:391px;height:30px;background:#d1d1d1"></div>
<svg class="a" style="left:63px;top:398px" width="18" height="12" viewBox="0 0 18 12"><path d="M2 2.5 L9 9.5 L16 2.5" stroke="#0f6cbd" stroke-width="1.15" fill="none"/></svg>
<div class="cell" style="top:386px;height:96px"></div>
<div class="code" style="left:137.5px;top:404px"><span style="color:#0b216f">1</span>
<span class="ln">2</span></div>
<div class="code" style="left:179.7px;top:404px"><span class="v">df</span> = <span class="v">spark</span>.<span class="f">sql</span><span class="b">(</span>"<span class="k">SELECT</span> * <span class="k">FROM</span> Lakehouse_security.products <span class="k">LIMIT</span> <span class="n">1000</span>"<span class="b">)</span>
<span class="f">display</span><span class="b">(</span><span class="v">df</span><span class="b">)</span></div>
</body></html>
